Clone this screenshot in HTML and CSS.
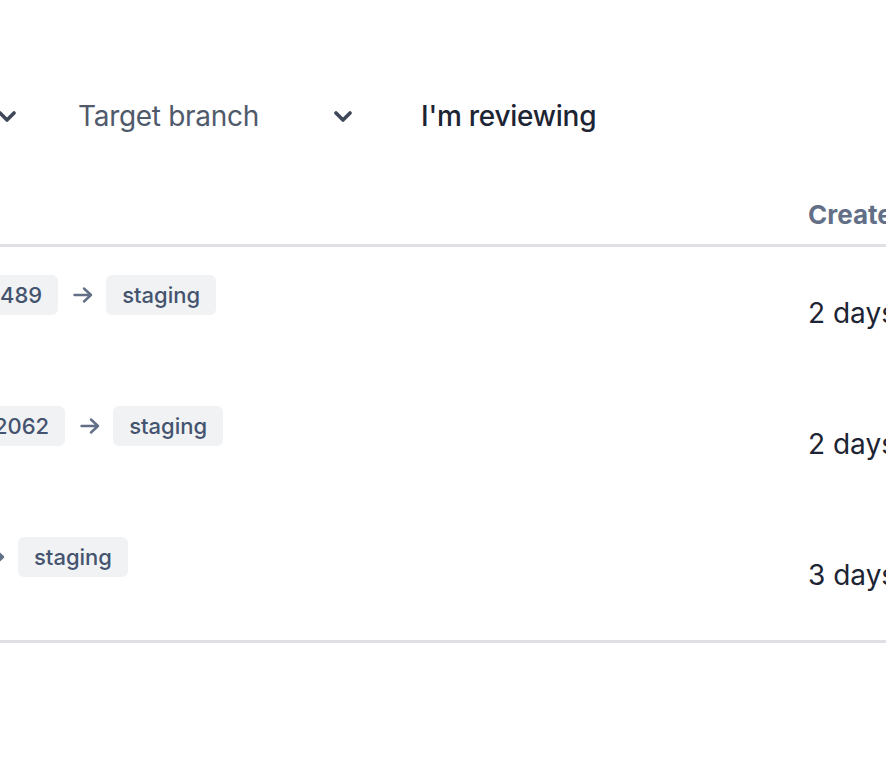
FILE: index.html
```html
<!DOCTYPE html>
<html>
<head>
<meta charset="utf-8">
<link rel="stylesheet" href="styles.css">
</head>
<body>
<div class="page">
  <div class="filters">
    <button class="dd dd-cut">
      <svg class="chev" width="18" height="11" viewBox="0 0 18 11"><path d="M2 2 L9 9 L16 2" /></svg>
    </button>
    <button class="dd dd-target">
      <span class="dd-label">Target branch</span>
      <svg class="chev" width="18" height="11" viewBox="0 0 18 11"><path d="M2 2 L9 9 L16 2" /></svg>
    </button>
    <button class="toggle">I'm reviewing</button>
  </div>

  <div class="table">
    <div class="thead">
      <div class="th th-main"></div>
      <div class="th">Created</div>
    </div>
    <div class="row">
      <div class="cell-main">
        <div class="branches">
          <span class="tag tag-cut">489</span>
          <svg class="arrow" width="20" height="16" viewBox="0 0 20 16"><path d="M1.5 8 H18 M11 1.5 L18 8 L11 14.5" /></svg>
          <span class="tag">staging</span>
        </div>
      </div>
      <div class="cell-date">2 days ago</div>
    </div>
    <div class="row">
      <div class="cell-main">
        <div class="branches">
          <span class="tag tag-cut tag-cut-more">2062</span>
          <svg class="arrow" width="20" height="16" viewBox="0 0 20 16"><path d="M1.5 8 H18 M11 1.5 L18 8 L11 14.5" /></svg>
          <span class="tag">staging</span>
        </div>
      </div>
      <div class="cell-date">2 days ago</div>
    </div>
    <div class="row">
      <div class="cell-main">
        <div class="branches">
          <svg class="arrow arrow-cut" width="20" height="16" viewBox="0 0 20 16"><path d="M1.5 8 H18 M11 1.5 L18 8 L11 14.5" /></svg>
          <span class="tag">staging</span>
        </div>
      </div>
      <div class="cell-date">3 days ago</div>
    </div>
  </div>
</div>
</body>
</html>
```

FILE: styles.css
```css
html, body {
  margin: 0;
  padding: 0;
  background: #ffffff;
  overflow: hidden;
}

body {
  font-family: Inter, "Noto Sans", "Liberation Sans", sans-serif;
  color: #172b4d;
}

.page {
  width: 1200px;
}

.filters {
  display: flex;
  align-items: center;
  height: 56px;
  margin-top: 88px;
}

button {
  font: inherit;
  background: none;
  border: none;
  padding: 0;
  margin: 0;
  display: flex;
  align-items: center;
  cursor: pointer;
}

.chev {
  display: block;
}

.chev path {
  fill: none;
  stroke: #3f4859;
  stroke-width: 3.6;
  stroke-linecap: round;
  stroke-linejoin: round;
}

.dd-cut {
  margin-left: -2px;
}

.dd-target {
  margin-left: 62px;
}

.dd-label {
  font-size: 28px;
  letter-spacing: -0.3px;
  color: #505a6b;
  width: 256px;
  text-align: left;
}

.toggle {
  margin-left: 69px;
  font-size: 28px;
  font-weight: 500;
  letter-spacing: -0.25px;
  color: #1d2433;
}

.table {
  margin-top: 40px;
}

.thead {
  display: grid;
  grid-template-columns: 808px 1fr;
  height: 60px;
  align-items: center;
  border-bottom: 3px solid #dfe1e5;
}

.th {
  font-size: 26px;
  font-weight: 700;
  color: #626f86;
}

.row {
  display: grid;
  grid-template-columns: 808px 1fr;
  height: 131px;
}

.row:last-child {
  border-bottom: 3px solid #dfe1e5;
}

.cell-main {
  padding-top: 28px;
}

.branches {
  display: flex;
  align-items: center;
  gap: 14px;
}

.tag {
  display: inline-flex;
  align-items: center;
  height: 40px;
  padding: 0 16px;
  background: #f1f2f4;
  border-radius: 6px;
  font-size: 22px;
  font-weight: 500;
  color: #44546f;
}

.tag-cut {
  padding-left: 0;
  border-radius: 0 6px 6px 0;
}

.tag-cut-more {
  margin-left: -6px;
}

.arrow {
  display: block;
  margin-left: 1px;
  margin-right: -1px;
}

.arrow path {
  fill: none;
  stroke: #626f86;
  stroke-width: 2.4;
  stroke-linecap: round;
  stroke-linejoin: round;
}

.arrow-cut {
  margin-left: -15px;
}

.cell-date {
  display: flex;
  align-items: center;
  font-size: 28px;
  color: #1d2433;
}
```
